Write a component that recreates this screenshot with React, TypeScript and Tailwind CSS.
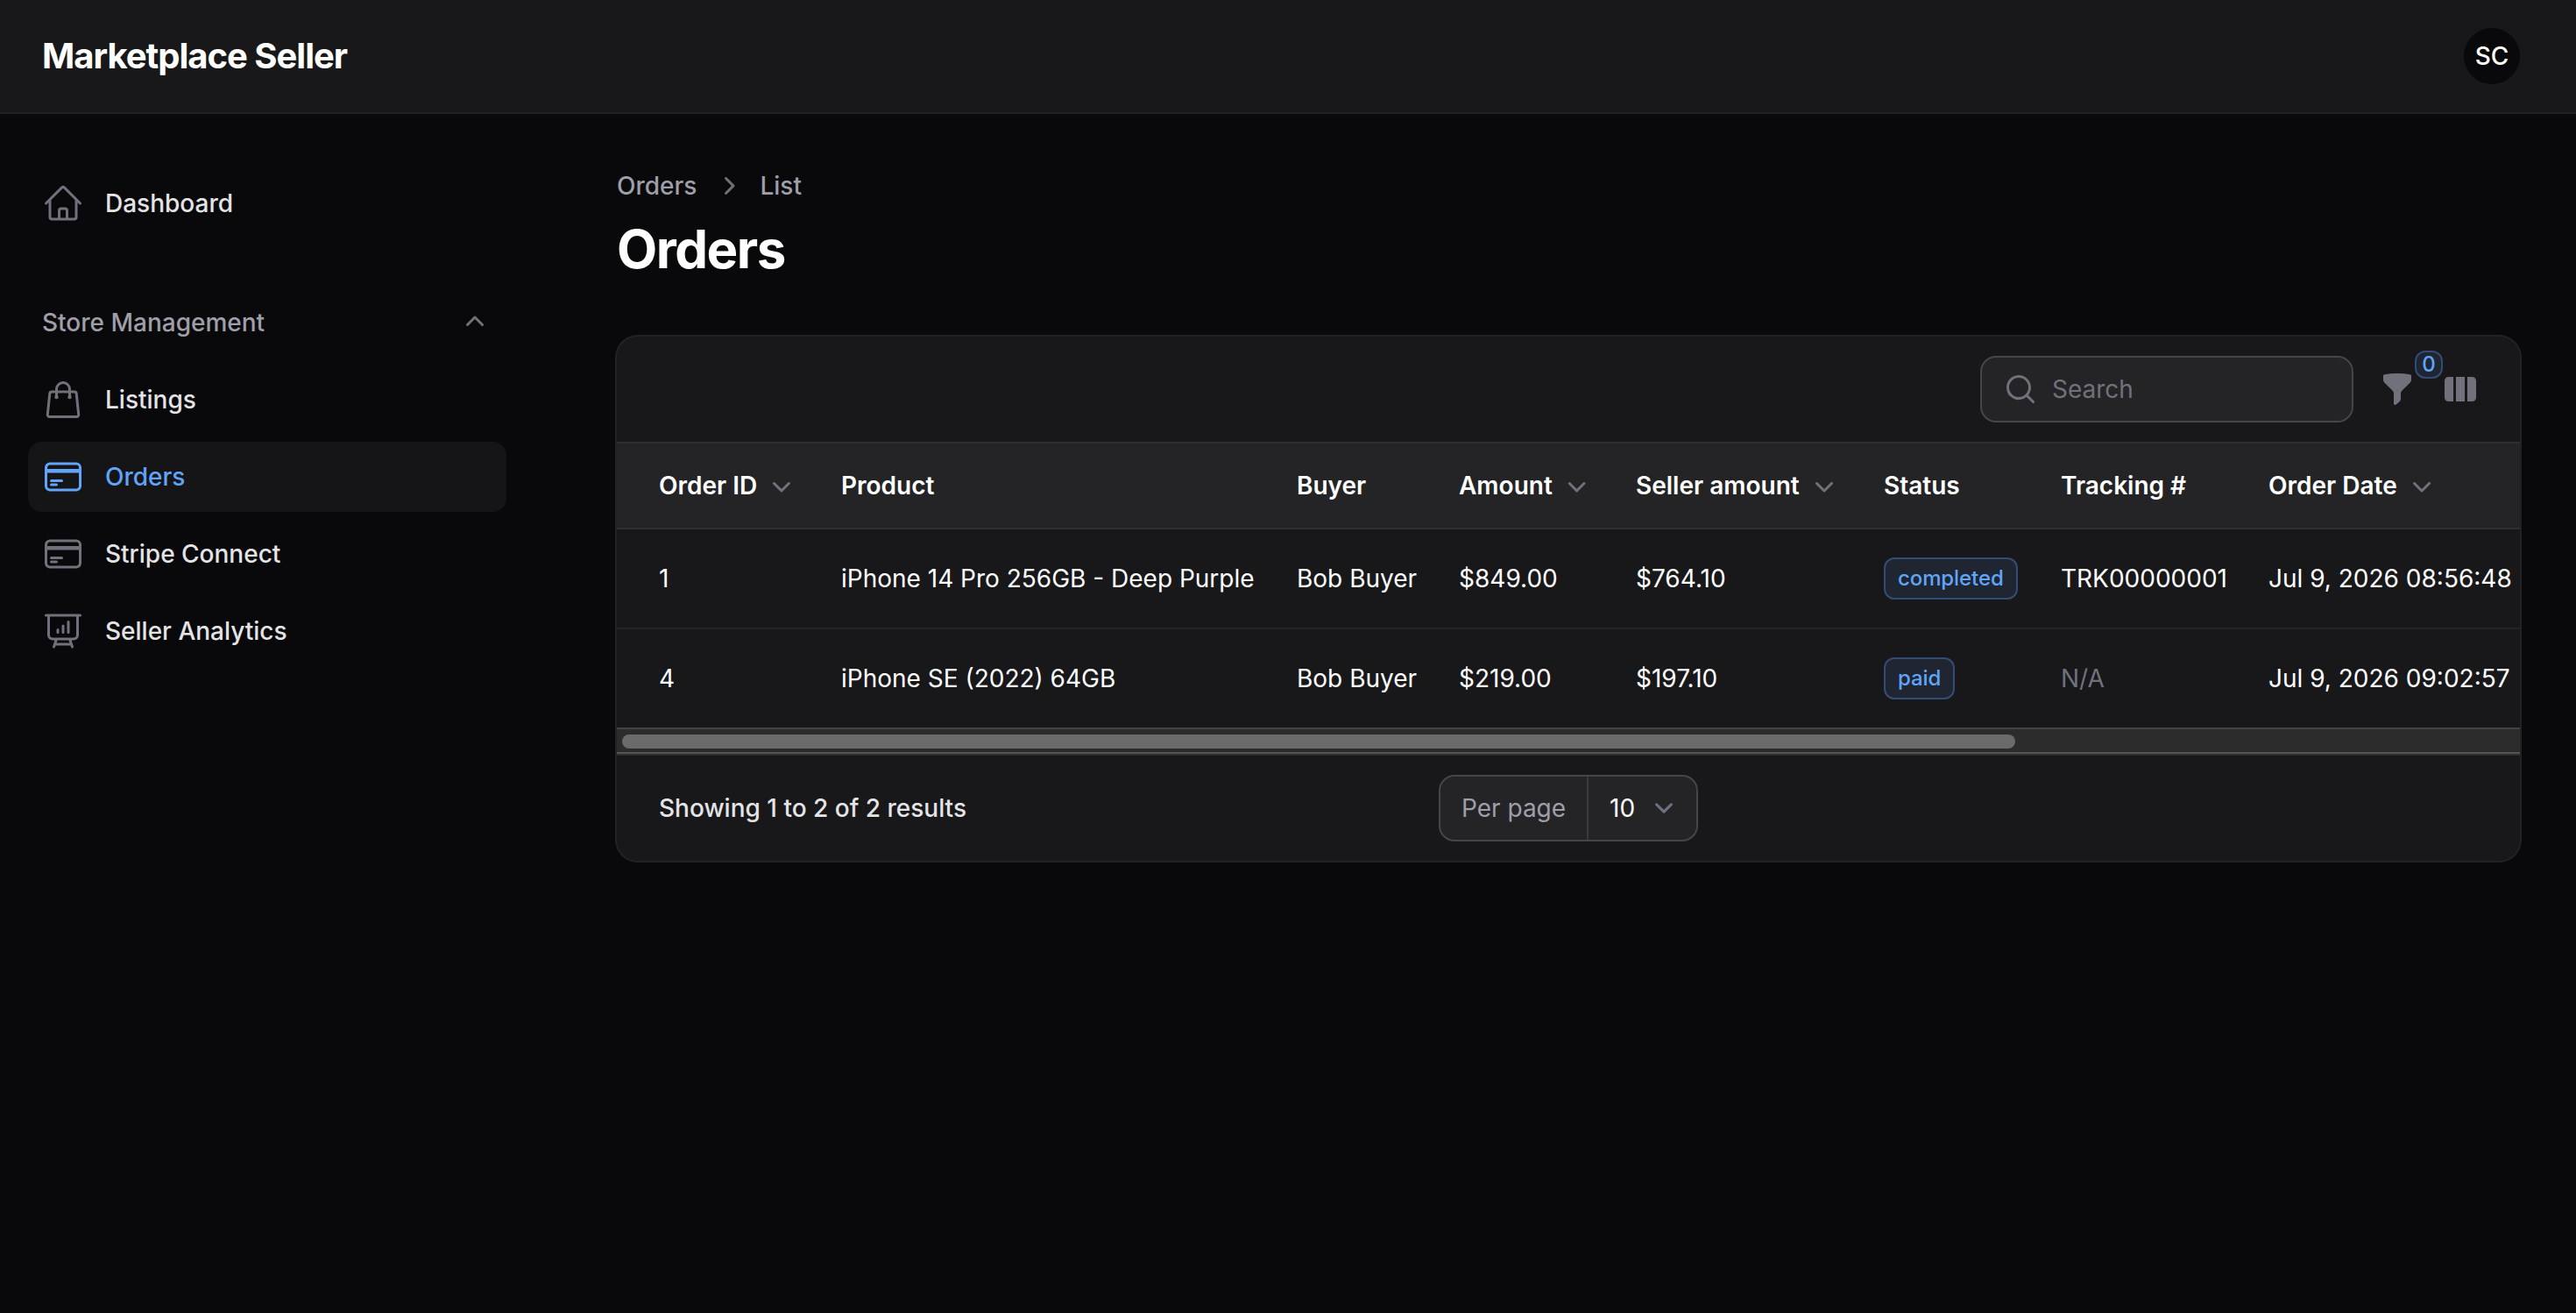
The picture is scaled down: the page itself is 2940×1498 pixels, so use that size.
import type { ComponentType, ReactNode } from 'react';
import {
  HiOutlineHome,
  HiOutlineShoppingBag,
  HiOutlineCreditCard,
  HiOutlinePresentationChartBar,
  HiMiniChevronDown,
  HiMiniChevronRight,
  HiMiniChevronUp,
  HiMiniFunnel,
  HiMiniMagnifyingGlass,
  HiMiniViewColumns,
} from 'react-icons/hi2';
import clsx from 'clsx';

type NavLink = {
  name: string;
  icon: ComponentType<{ className?: string }>;
  active?: boolean;
};

const storeLinks: NavLink[] = [
  { name: 'Listings', icon: HiOutlineShoppingBag },
  { name: 'Orders', icon: HiOutlineCreditCard, active: true },
  { name: 'Stripe Connect', icon: HiOutlineCreditCard },
  { name: 'Seller Analytics', icon: HiOutlinePresentationChartBar },
];

const columns = [
  { label: 'Order ID', sortable: true, width: 'w-[232px]' },
  { label: 'Product', sortable: false, width: 'w-[520px]' },
  { label: 'Buyer', sortable: false, width: 'w-[185px]' },
  { label: 'Amount', sortable: true, width: 'w-[202px]' },
  { label: 'Seller amount', sortable: true, width: 'w-[283px]' },
  { label: 'Status', sortable: false, width: 'w-[202px]' },
  { label: 'Tracking #', sortable: false, width: 'w-[237px]' },
  { label: 'Order Date', sortable: true, width: 'w-[341px]' },
];

const orders = [
  {
    id: 1,
    product: 'iPhone 14 Pro 256GB - Deep Purple',
    buyer: 'Bob Buyer',
    amount: '$849.00',
    sellerAmount: '$764.10',
    status: 'completed',
    tracking: 'TRK00000001',
    date: 'Jul 9, 2026 08:56:48',
  },
  {
    id: 4,
    product: 'iPhone SE (2022) 64GB',
    buyer: 'Bob Buyer',
    amount: '$219.00',
    sellerAmount: '$197.10',
    status: 'paid',
    tracking: null,
    date: 'Jul 9, 2026 09:02:57',
  },
];

function Topbar() {
  return (
    <header className="flex h-[130px] items-center justify-between border-b-2 border-white/10 bg-zinc-900 bg-clip-padding pl-12 pr-16">
      <div className="text-[40px] font-bold leading-10 tracking-tight text-white">
        Marketplace Seller
      </div>
      <button className="flex size-16 items-center justify-center rounded-full bg-zinc-950 text-[28px] font-medium text-white">
        SC
      </button>
    </header>
  );
}

function NavItem({ name, icon: Icon, active }: NavLink) {
  return (
    <a
      href="#"
      className={clsx('flex h-20 items-center gap-6 rounded-2xl px-4', {
        'bg-white/5 text-[#60a5fa]': active,
        'text-zinc-200': !active,
      })}
    >
      <Icon className={clsx('size-12', !active && 'text-zinc-500')} />
      <span className="text-[28px] font-medium leading-10">{name}</span>
    </a>
  );
}

function Sidebar() {
  return (
    <aside className="w-[640px] shrink-0 pl-8 pr-[62px] pt-[62px]">
      <nav className="flex flex-col gap-14">
        <NavItem name="Dashboard" icon={HiOutlineHome} />
        <div className="flex flex-col gap-2">
          <div className="flex h-20 items-center justify-between px-4">
            <span className="text-[28px] font-medium leading-[48px] text-zinc-400">
              Store Management
            </span>
            <HiMiniChevronUp className="size-10 text-zinc-500" />
          </div>
          {storeLinks.map((link) => (
            <NavItem key={link.name} {...link} />
          ))}
        </div>
      </nav>
    </aside>
  );
}

function Badge({ children }: { children: ReactNode }) {
  return (
    <span className="inline-flex h-12 items-center rounded-xl bg-[#60a5fa]/10 px-4 text-[24px] font-medium leading-8 tracking-[-0.1px] text-[#60a5fa] inset-ring-2 inset-ring-[#5b96f5]/35">
      {children}
    </span>
  );
}

function Toolbar() {
  return (
    <div className="flex h-[120px] items-center justify-end pl-12 pr-8">
      <label className="flex h-[72px] w-[422px] items-center gap-4 rounded-2xl bg-white/5 px-6 ring-2 ring-white/20">
        <HiMiniMagnifyingGlass className="size-10 shrink-0 text-zinc-500" />
        <input
          type="text"
          placeholder="Search"
          className="w-full bg-transparent text-[28px] leading-[48px] text-white outline-none placeholder:text-zinc-500"
        />
      </label>
      <button className="relative ml-4 flex size-[72px] items-center justify-center text-zinc-500">
        <HiMiniFunnel className="size-10" />
        <span className="absolute -top-2 left-14 flex size-8 items-center justify-center rounded-xl bg-zinc-900">
          <span className="flex size-8 items-center justify-center rounded-xl bg-[#60a5fa]/10 text-[24px] font-medium leading-8 text-[#60a5fa] inset-ring-2 inset-ring-[#5b96f5]/35">
            0
          </span>
        </span>
      </button>
      <button className="flex size-[72px] items-center justify-center text-zinc-500">
        <HiMiniViewColumns className="size-10" />
      </button>
    </div>
  );
}

function OrdersTable() {
  return (
    <div className="overflow-hidden border-t-2 border-white/10">
      <table className="w-[2202px] table-fixed border-separate border-spacing-0 whitespace-nowrap text-left text-[28px] leading-[48px] text-white">
        <thead>
          <tr className="bg-white/5">
            {columns.map((column) => (
              <th
                key={column.label}
                className={clsx(
                  'h-[98px] border-b-2 border-white/5 px-6 py-0 font-semibold first:pl-12',
                  column.width
                )}
              >
                <span className="flex items-center gap-2">
                  {column.label}
                  {column.sortable && (
                    <HiMiniChevronDown className="size-10 text-zinc-500" />
                  )}
                </span>
              </th>
            ))}
          </tr>
        </thead>
        <tbody className="[&>tr:first-child>td]:h-[114px] [&>tr:first-child>td]:border-b-2 [&>tr>td]:border-white/5 [&>tr>td]:px-6 [&>tr>td]:py-0 [&>tr>td:first-child]:pl-12">
          {orders.map((order) => (
            <tr key={order.id} className="h-[112px]">
              <td>{order.id}</td>
              <td>{order.product}</td>
              <td>{order.buyer}</td>
              <td>{order.amount}</td>
              <td>{order.sellerAmount}</td>
              <td>
                <div className="flex">
                  <Badge>{order.status}</Badge>
                </div>
              </td>
              <td>
                {order.tracking ?? <span className="text-zinc-500">N/A</span>}
              </td>
              <td>{order.date}</td>
            </tr>
          ))}
        </tbody>
      </table>
      {/* Horizontal scrollbar */}
      <div className="h-[30px] border-b-2 border-t-2 border-b-[#545454] border-t-[#434343] bg-[#2c2c2c] px-1.5 pt-1.5">
        <div className="h-4 w-[1590px] rounded-full bg-[#6b6b6b]" />
      </div>
    </div>
  );
}

function Pagination() {
  return (
    <div className="grid h-[122px] grid-cols-[1fr_auto_1fr] items-center border-t-2 border-white/10 px-12 text-[28px] leading-[48px]">
      <span className="font-medium text-zinc-200">
        Showing 1 to 2 of 2 results
      </span>
      <div className="flex h-[72px] w-[292px] rounded-2xl bg-white/5 ring-2 ring-white/20">
        <div className="flex w-[169px] items-center border-r-2 border-white/10 pl-6 text-zinc-400">
          Per page
        </div>
        <div className="flex flex-1 items-center justify-between pl-6 pr-4 text-white">
          10
          <svg
            viewBox="0 0 20 20"
            fill="none"
            className="size-[42px] stroke-gray-500"
          >
            <path
              strokeLinecap="round"
              strokeLinejoin="round"
              strokeWidth="1.5"
              d="M6 8l4 4 4-4"
            />
          </svg>
        </div>
      </div>
    </div>
  );
}

export default function App() {
  return (
    <div className="min-h-screen overflow-hidden bg-zinc-950 font-['Inter',sans-serif] antialiased">
      <Topbar />
      <div className="flex">
        <Sidebar />
        <main className="min-w-0 flex-1 px-16 pt-[62px]">
          <div className="flex items-center gap-4 text-[28px] font-medium leading-10 text-zinc-400">
            <span>Orders</span>
            <HiMiniChevronRight className="size-10 text-zinc-500" />
            <span>List</span>
          </div>
          <h1 className="mt-4 text-[60px] font-bold leading-[72px] tracking-tight text-white">
            Orders
          </h1>
          <section className="mt-16 overflow-hidden rounded-3xl bg-zinc-900 ring-2 ring-white/10">
            <Toolbar />
            <OrdersTable />
            <Pagination />
          </section>
        </main>
      </div>
    </div>
  );
}
